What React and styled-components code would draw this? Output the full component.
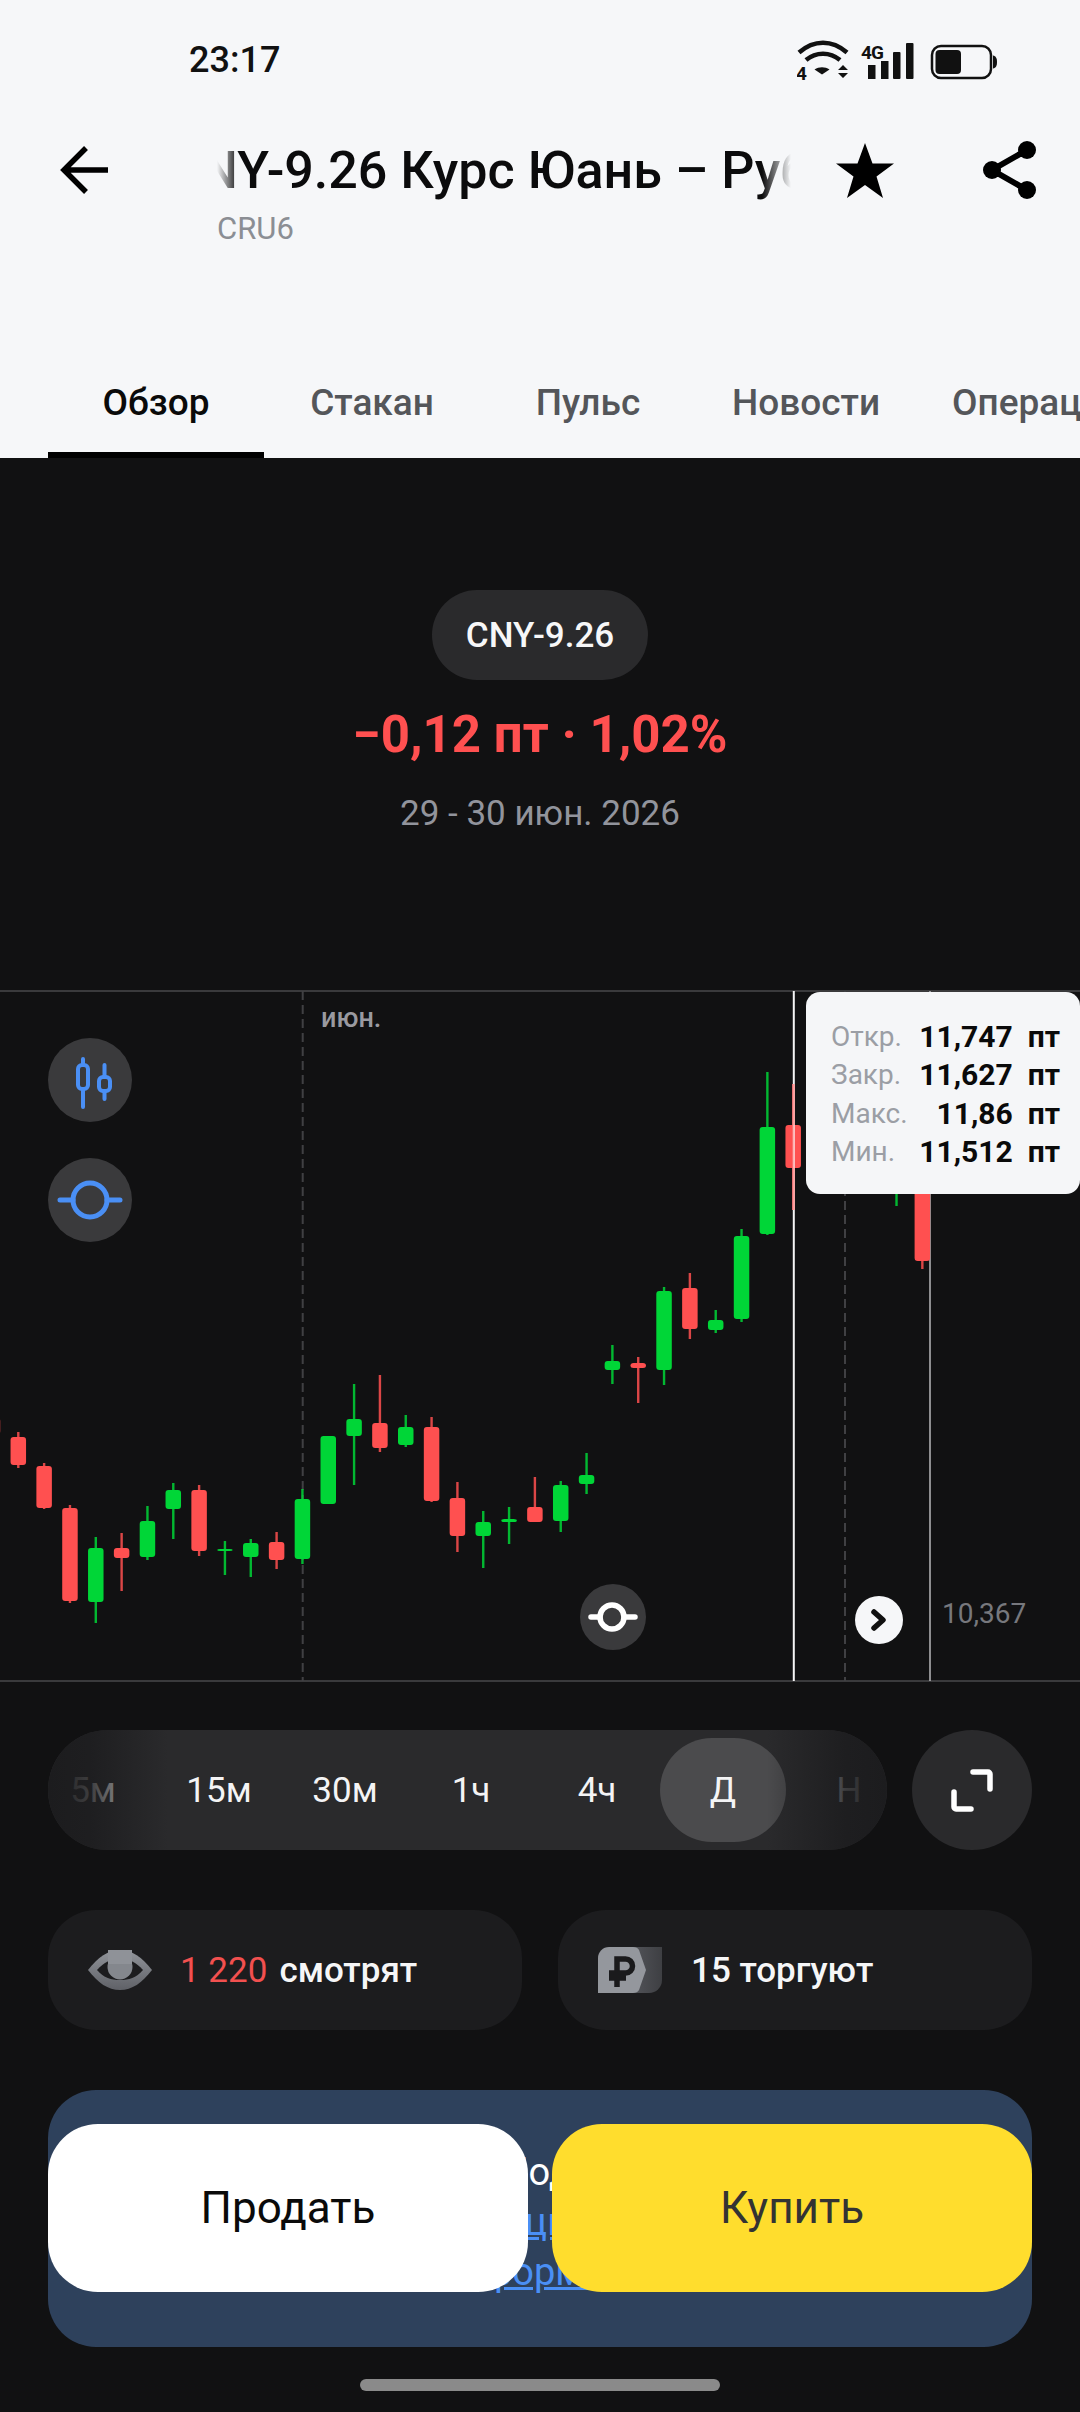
import styled, { createGlobalStyle } from "styled-components";

const GlobalStyle = createGlobalStyle`
  html, body {
    margin: 0;
    padding: 0;
    background: #111112;
  }
  * {
    box-sizing: border-box;
  }
  body {
    font-family: Roboto, "Noto Sans", sans-serif;
  }
`;

const Page = styled.div`
  width: 1080px;
  height: 2412px;
  overflow: hidden;
  background: #111112;
`;

const Top = styled.header`
  height: 458px;
  background: #f6f7f9;
  display: flex;
  flex-direction: column;
`;

const StatusBar = styled.div`
  height: 120px;
  padding: 0 83px 0 189px;
  display: flex;
  justify-content: space-between;
  align-items: flex-start;
`;

const Time = styled.span`
  margin-top: 38px;
  font-size: 36px;
  line-height: 44px;
  font-weight: 500;
  color: #111;
`;

const StatusIcons = styled.svg`
  margin-top: 40px;
  width: 200px;
  height: 44px;
`;

const Header = styled.div`
  height: 150px;
  padding: 20px 45px 0 60px;
  display: flex;
  align-items: flex-start;
`;

const BackIcon = styled.svg`
  width: 50px;
  height: 60px;
  flex: none;
`;

const TitleBlock = styled.div`
  width: 574px;
  margin-left: 107px;
  flex: none;
`;

const TitleClip = styled.div`
  overflow: hidden;
  white-space: nowrap;
  mask-image: linear-gradient(90deg, transparent 0, #000 22px, #000 545px, transparent 574px);
`;

const Title = styled.div`
  margin-left: -50px;
  font-size: 52px;
  line-height: 62px;
  font-weight: 500;
  color: #0b0b0c;
`;

const Ticker = styled.div`
  margin-top: 9px;
  font-size: 31px;
  line-height: 36px;
  color: #8b8e94;
`;

const HeaderIcon = styled.svg`
  flex: none;
  margin-left: ${(p) => p.$gap}px;
  width: ${(p) => p.$size}px;
  height: 60px;
`;

const Tabs = styled.nav`
  margin-top: auto;
  padding-left: 48px;
  display: flex;
  overflow: hidden;
`;

const Tab = styled.div`
  flex: none;
  min-width: 216px;
  height: 88px;
  padding: 0 36px 18px;
  display: flex;
  align-items: center;
  justify-content: center;
  border-bottom: 6px solid ${(p) => (p.$active ? "#000" : "transparent")};
  font-size: 37px;
  font-weight: 500;
  color: ${(p) => (p.$active ? "#0a0a0a" : "#54565a")};
  white-space: nowrap;
`;

const Hero = styled.section`
  height: 532px;
  padding-top: 132px;
  display: flex;
  flex-direction: column;
  align-items: center;
`;

const Pill = styled.div`
  width: 216px;
  height: 90px;
  border-radius: 45px;
  background: #2a2a2c;
  display: flex;
  align-items: center;
  justify-content: center;
  font-size: 35px;
  font-weight: 500;
  color: #f7f7f8;
`;

const Change = styled.div`
  margin-top: 25px;
  font-size: 51px;
  line-height: 60px;
  font-weight: 700;
  color: #ff5050;
`;

const Period = styled.div`
  margin-top: 27px;
  font-size: 35px;
  line-height: 44px;
  color: #92949c;
`;

const Chart = styled.section`
  position: relative;
  height: 692px;
  border-top: 2px solid #3a3a3c;
  border-bottom: 2px solid #3a3a3c;
`;

const ChartDrawing = styled.svg`
  position: absolute;
  left: 0;
  top: -2px;
  width: 1080px;
  height: 692px;
`;

const MonthLabel = styled.span`
  position: absolute;
  left: 321px;
  top: 9px;
  font-size: 27px;
  line-height: 34px;
  font-weight: 500;
  color: #9a9aa0;
`;

const RoundButton = styled.div`
  position: absolute;
  left: ${(p) => p.$left}px;
  top: ${(p) => p.$top}px;
  width: ${(p) => p.$size}px;
  height: ${(p) => p.$size}px;
  border-radius: 50%;
  background: ${(p) => p.$bg};
  display: flex;
  align-items: center;
  justify-content: center;
`;

const PriceLabel = styled.span`
  position: absolute;
  left: 942px;
  top: 604px;
  font-size: 28px;
  line-height: 36px;
  color: #77787d;
`;

const Tooltip = styled.div`
  position: absolute;
  left: 806px;
  top: 0;
  width: 274px;
  height: 202px;
  padding: 25px 20px 0 25px;
  border-radius: 14px;
  background: #f5f6f8;
  display: grid;
  grid-template-columns: 1fr auto auto;
  grid-auto-rows: 38.5px;
  align-items: center;
`;

const TipLabel = styled.span`
  font-size: 28px;
  color: #9b9ea5;
`;

const TipValue = styled.span`
  font-size: 30px;
  font-weight: 700;
  color: #0a0a0a;
  text-align: right;
`;

const TipUnit = styled.span`
  margin-left: 15px;
  font-size: 30px;
  font-weight: 700;
  color: #0a0a0a;
`;

const Controls = styled.div`
  margin: 48px 48px 0;
  display: flex;
  justify-content: space-between;
`;

const PeriodBar = styled.div`
  position: relative;
  width: 839px;
  height: 120px;
  border-radius: 60px;
  overflow: hidden;
  background: #2a2a2c;
  display: flex;
  align-items: center;
`;

const PeriodList = styled.div`
  margin-left: -18px;
  display: flex;
  flex: none;
`;

const PeriodItem = styled.div`
  width: 126px;
  height: 104px;
  border-radius: 52px;
  flex: none;
  display: flex;
  align-items: center;
  justify-content: center;
  font-size: 35px;
  color: #f4f4f5;
  background: ${(p) => (p.$active ? "#4b4b4d" : "transparent")};
`;

const Fade = styled.div`
  position: absolute;
  top: 0;
  bottom: 0;
  ${(p) => p.$side}: 0;
  width: 120px;
  background: linear-gradient(
    ${(p) => (p.$side === "left" ? "90deg" : "270deg")},
    #1c1c1e 0,
    rgba(28, 28, 30, 0.85) 35%,
    rgba(42, 42, 44, 0) 100%
  );
`;

const ExpandButton = styled.div`
  width: 120px;
  height: 120px;
  border-radius: 50%;
  background: #2a2a2c;
  display: flex;
  align-items: center;
  justify-content: center;
`;

const Stats = styled.div`
  margin: 60px 48px 0;
  display: grid;
  grid-template-columns: 474px 474px;
  justify-content: space-between;
`;

const StatCard = styled.div`
  height: 120px;
  border-radius: 48px;
  background: #1c1c1e;
  padding-left: ${(p) => p.$pad}px;
  display: flex;
  align-items: center;
  font-size: 35px;
  font-weight: 500;
  color: #f6f6f7;
`;

const StatIcon = styled.svg`
  flex: none;
  margin-right: ${(p) => p.$gap}px;
`;

const Red = styled.span`
  color: #f2504f;
  font-weight: 400;
  margin-right: 12px;
`;

const Banner = styled.section`
  position: relative;
  height: 257px;
  margin: 60px 48px 0;
  padding-top: 57px;
  border-radius: 48px;
  background: #2e415c;
  text-align: center;
  font-size: 38px;
  line-height: 50px;
  color: #fff;
`;

const BannerLink = styled.div`
  color: #4a8ff5;
  text-decoration: underline;
`;

const Actions = styled.div`
  position: absolute;
  left: 0;
  right: 0;
  top: 34px;
  display: flex;
  gap: 24px;
`;

const ActionButton = styled.div`
  flex: 1;
  height: 168px;
  border-radius: 50px;
  background: ${(p) => p.$bg};
  color: ${(p) => p.$color};
  display: flex;
  align-items: center;
  justify-content: center;
  font-size: 44px;
`;

const HomeIndicator = styled.div`
  width: 360px;
  height: 12px;
  margin: 32px auto 0;
  border-radius: 6px;
  background: #8a8a8a;
`;

const GREEN = "#00d637";
const RED = "#ff5050";

// [index, wick top, body top, body bottom, wick bottom, up]
const candles = [
  [0, 1412, 1418, 1434, 1438, 0],
  [1, 1432, 1437, 1465, 1468, 0],
  [2, 1463, 1466, 1508, 1509, 0],
  [3, 1505, 1508, 1601, 1603, 0],
  [4, 1537, 1548, 1602, 1623, 1],
  [5, 1533, 1548, 1558, 1591, 0],
  [6, 1506, 1521, 1557, 1560, 1],
  [7, 1483, 1490, 1509, 1539, 1],
  [8, 1485, 1490, 1551, 1556, 0],
  [9, 1541, 1549, 1551, 1575, 1],
  [10, 1539, 1543, 1557, 1577, 1],
  [11, 1532, 1542, 1560, 1569, 0],
  [12, 1489, 1499, 1559, 1564, 1],
  [13, 1436, 1436, 1504, 1504, 1],
  [14, 1384, 1419, 1436, 1485, 1],
  [15, 1375, 1423, 1448, 1452, 0],
  [16, 1415, 1427, 1445, 1447, 1],
  [17, 1417, 1427, 1501, 1502, 0],
  [18, 1482, 1498, 1536, 1552, 0],
  [19, 1511, 1522, 1536, 1568, 1],
  [20, 1507, 1519, 1522, 1544, 1],
  [21, 1477, 1507, 1522, 1522, 0],
  [22, 1481, 1485, 1521, 1532, 1],
  [23, 1453, 1475, 1484, 1494, 1],
  [24, 1345, 1361, 1370, 1384, 1],
  [25, 1357, 1363, 1368, 1403, 0],
  [26, 1287, 1291, 1370, 1385, 1],
  [27, 1273, 1288, 1329, 1339, 0],
  [28, 1310, 1320, 1330, 1333, 1],
  [29, 1229, 1236, 1319, 1322, 1],
  [30, 1072, 1127, 1234, 1235, 1],
  [31, 1084, 1125, 1168, 1210, 0],
  [35, 1150, 1160, 1190, 1206, 1],
  [36, 1180, 1190, 1261, 1269, 0],
];

const candleX = (i) => 18.3 + 25.83 * (i - 1);

const tooltipRows = [
  ["Откр.", "11,747"],
  ["Закр.", "11,627"],
  ["Макс.", "11,86"],
  ["Мин.", "11,512"],
];

const periods = ["5м", "15м", "30м", "1ч", "4ч", "Д", "Н"];

function Candles() {
  return (
    <ChartDrawing viewBox="0 990 1080 692">
      <line x1="302.7" y1="991" x2="302.7" y2="1681" stroke="#404043" strokeWidth="2" strokeDasharray="9 5" />
      <line x1="845" y1="991" x2="845" y2="1681" stroke="#404043" strokeWidth="2" strokeDasharray="9 5" />
      <line x1="930" y1="991" x2="930" y2="1681" stroke="#b9b9bb" strokeWidth="1.5" />
      {candles.map(([i, wt, bt, bb, wb, up]) => (
        <g key={i} fill={up ? GREEN : RED}>
          <rect x={candleX(i) - 1.2} y={wt} width="2.4" height={wb - wt} opacity="0.85" />
          <rect x={candleX(i) - 7.75} y={bt} width="15.5" height={bb - bt} rx="3" />
        </g>
      ))}
      <line x1="793.8" y1="991" x2="793.8" y2="1681" stroke="#f4f4f5" strokeWidth="2" />
      <line x1="793.8" y1="1084" x2="793.8" y2="1125" stroke="#ff9c9c" strokeWidth="2" />
      <line x1="793.8" y1="1168" x2="793.8" y2="1210" stroke="#ff9c9c" strokeWidth="2" />
      <line x1="793.8" y1="1125" x2="793.8" y2="1168" stroke="#ffb0b0" strokeWidth="1.5" />
    </ChartDrawing>
  );
}

function StatusGlyphs() {
  return (
    <StatusIcons viewBox="797 40 200 44">
      <g fill="none" stroke="#111" strokeWidth="4.5">
        <path d="M799 52.5c15-13 33-13 48 0" />
        <path d="M806 60c10-8.500 24-8.500 34 0" />
      </g>
      <path d="M822 74.500l-7.500-5c4.500-3 10.500-3 15 0z" fill="#111" />
      <path d="M838 70l5-5 5 5zM838 73l5 5 5-5z" fill="#111" />
      <text x="796" y="80" fontFamily="Roboto" fontWeight="700" fontSize="19" fill="#111">4</text>
      <text x="861" y="59" fontFamily="Roboto" fontWeight="700" fontSize="19" letterSpacing="-1" fill="#111">4G</text>
      <rect x="868" y="65" width="7.500" height="14" fill="#111" />
      <rect x="881" y="61" width="7.500" height="18" fill="#111" />
      <rect x="893" y="52" width="7.500" height="27" fill="#111" rx="1" />
      <rect x="906" y="43" width="7.500" height="36" fill="#111" rx="1" />
      <rect x="932" y="46" width="59" height="32" rx="9" fill="none" stroke="#111" strokeWidth="2.500" />
      <rect x="935.500" y="50" width="25.500" height="24" rx="4" fill="#111" />
      <path d="M993 55.500c3 .5 4 3 4 6.500s-1 6-4 6.500z" fill="#111" />
    </StatusIcons>
  );
}

function EyeIcon() {
  return (
    <StatIcon $gap={27} width="66" height="40" viewBox="0 0 66 40">
      <defs>
        <linearGradient id="eyeFill" x1="0" y1="0" x2="0" y2="1">
          <stop offset="0" stopColor="#92959b" />
          <stop offset="1" stopColor="#5f6167" />
        </linearGradient>
      </defs>
      <path d="M1 20C11 7 21 0 33 0s22 7 32 20c-10 13-20 20-32 20S11 33 1 20z" fill="url(#eyeFill)" />
      <path d="M10 20c7-8 14-11 23-11s16 3 23 11c-7 8-14 10-23 10s-16-2-23-10z" fill="#1c1c1e" />
      <circle cx="33" cy="17" r="12.500" fill="#84878d" />
      <rect x="21" y="0" width="24" height="14" fill="#8f9298" />
    </StatIcon>
  );
}

function RubleIcon() {
  return (
    <StatIcon $gap={29} width="64" height="46" viewBox="0 0 64 46">
      <defs>
        <linearGradient id="rubBack" x1="0" y1="0" x2="1" y2="0">
          <stop offset="0" stopColor="#5c5e64" />
          <stop offset="1" stopColor="#3e3f43" />
        </linearGradient>
      </defs>
      <path d="M20 0h44v33a13 13 0 0 1-13 13H20z" fill="url(#rubBack)" />
      <path d="M11 0h24c3 0 5 1 6 3l7 20-7 20c-1 2-3 3-6 3H0V11A11 11 0 0 1 11 0z" fill="#94979d" />
      <path
        d="M19 34V12h8.500a6.500 6.500 0 0 1 0 14H11M11 31h17M19 34v6"
        fill="none"
        stroke="#1a1a1c"
        strokeWidth="5.500"
      />
    </StatIcon>
  );
}

export default function App() {
  return (
    <Page>
      <GlobalStyle />
      <Top>
        <StatusBar>
          <Time>23:17</Time>
          <StatusGlyphs />
        </StatusBar>
        <Header>
          <BackIcon viewBox="0 0 50 60">
            <path d="M48 30H4M26 8 4 30l22 22" fill="none" stroke="#000" strokeWidth="5.500" />
          </BackIcon>
          <TitleBlock>
            <TitleClip>
              <Title>CNY-9.26 Курс Юань – Рубль</Title>
            </TitleClip>
            <Ticker>CRU6</Ticker>
          </TitleBlock>
          <HeaderIcon $gap={44} $size={60} viewBox="0 0 60 60">
            <path d="M30 3l7.500 20.500H59L41.500 36.500 48 58 30 45 12 58l6.500-21.500L1 23.500h21.500z" fill="#000" />
          </HeaderIcon>
          <HeaderIcon $gap={86} $size={60} viewBox="0 0 60 60">
            <g fill="#000">
              <circle cx="46" cy="10" r="9" />
              <circle cx="11" cy="30" r="9" />
              <circle cx="46" cy="50" r="9" />
            </g>
            <path d="M46 10 11 30l35 20" fill="none" stroke="#000" strokeWidth="6" />
          </HeaderIcon>
        </Header>
        <Tabs>
          <Tab $active>Обзор</Tab>
          <Tab>Стакан</Tab>
          <Tab>Пульс</Tab>
          <Tab>Новости</Tab>
          <Tab>Операции</Tab>
        </Tabs>
      </Top>

      <Hero>
        <Pill>CNY-9.26</Pill>
        <Change>−0,12 пт · 1,02%</Change>
        <Period>29 - 30 июн. 2026</Period>
      </Hero>

      <Chart>
        <Candles />
        <MonthLabel>июн.</MonthLabel>
        <RoundButton $left={48} $top={46} $size={84} $bg="#3a3a3c">
          <svg width="60" height="60" viewBox="0 0 60 60" fill="none" stroke="#4a8ff5" strokeWidth="4" strokeLinecap="round">
            <rect x="18" y="15" width="10" height="24" rx="4" />
            <path d="M23 9v6M23 39v18" />
            <rect x="39" y="27" width="11" height="14" rx="4" />
            <path d="M44.500 15v12M44.500 41v8" />
          </svg>
        </RoundButton>
        <RoundButton $left={48} $top={166} $size={84} $bg="#3a3a3c">
          <svg width="70" height="50" viewBox="0 0 70 50" fill="none" stroke="#4a8ff5" strokeWidth="5" strokeLinecap="round">
            <circle cx="35" cy="25" r="17" />
            <path d="M5 25h13M52 25h13" />
          </svg>
        </RoundButton>
        <RoundButton $left={580} $top={592} $size={66} $bg="#3a3a3c">
          <svg width="54" height="36" viewBox="0 0 54 36" fill="none" stroke="#fff" strokeWidth="5.500" strokeLinecap="round">
            <circle cx="26" cy="18" r="12" />
            <path d="M5 18h9M38 18h11" />
          </svg>
        </RoundButton>
        <RoundButton $left={855} $top={604} $size={48} $bg="#f6f7f9">
          <svg width="20" height="24" viewBox="0 0 20 24" fill="none" stroke="#111" strokeWidth="5.500" strokeLinecap="round" strokeLinejoin="round">
            <path d="M5 4l9 8-9 8" />
          </svg>
        </RoundButton>
        <PriceLabel>10,367</PriceLabel>
        <Tooltip>
          {tooltipRows.map(([label, value]) => (
            <>
              <TipLabel key={label}>{label}</TipLabel>
              <TipValue>{value}</TipValue>
              <TipUnit>пт</TipUnit>
            </>
          ))}
        </Tooltip>
      </Chart>

      <Controls>
        <PeriodBar>
          <PeriodList>
            {periods.map((p) => (
              <PeriodItem key={p} $active={p === "Д"}>
                {p}
              </PeriodItem>
            ))}
          </PeriodList>
          <Fade $side="left" />
          <Fade $side="right" />
        </PeriodBar>
        <ExpandButton>
          <svg width="50" height="50" viewBox="0 0 50 50" fill="none" stroke="#fff" strokeWidth="5.500" strokeLinecap="round" strokeLinejoin="round">
            <path d="M26 7h15a2 2 0 0 1 2 2v15M7 27v15a2 2 0 0 0 2 2h15" />
          </svg>
        </ExpandButton>
      </Controls>

      <Stats>
        <StatCard $pad={39}>
          <EyeIcon />
          <Red>1 220</Red>смотрят
        </StatCard>
        <StatCard $pad={40}>
          <RubleIcon />
          15 торгуют
        </StatCard>
      </Stats>

      <Banner>
        <div>Сначала Подробности</div>
        <BannerLink>о спецификации контракта</BannerLink>
        <BannerLink>и информации</BannerLink>
        <Actions>
          <ActionButton $bg="#fff" $color="#0a0a0a">Продать</ActionButton>
          <ActionButton $bg="#ffdd2d" $color="#333">Купить</ActionButton>
        </Actions>
      </Banner>

      <HomeIndicator />
    </Page>
  );
}
